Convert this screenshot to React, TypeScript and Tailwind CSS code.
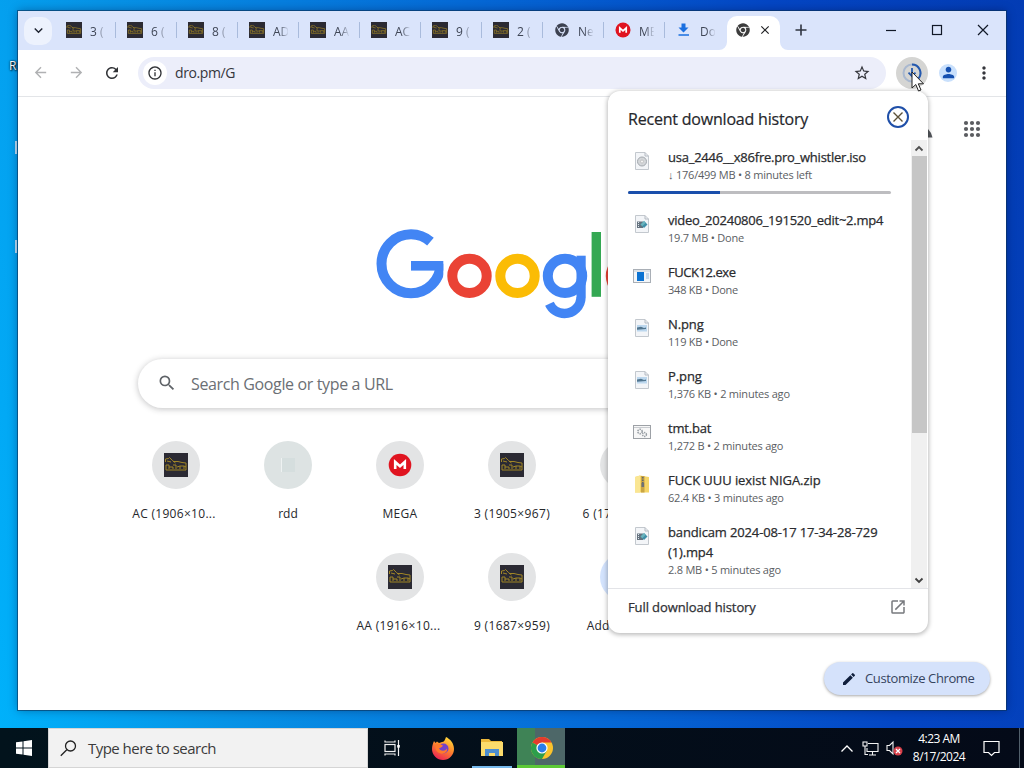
import type { ReactNode } from 'react'
import { FaChrome } from 'react-icons/fa'
import {
  MdArrowBack,
  MdArrowForward,
  MdClose,
  MdEdit,
  MdInfoOutline,
  MdKeyboardArrowDown,
  MdMoreVert,
  MdOpenInNew,
  MdPerson,
  MdRefresh,
  MdSearch,
  MdStarBorder,
} from 'react-icons/md'

type TabIcon = 'sketch' | 'chrome' | 'mega' | 'download'
type FileKind = 'iso' | 'video' | 'exe' | 'image' | 'bat' | 'zip'

interface Tab {
  icon: TabIcon
  title: string
}

interface Download {
  kind: FileKind
  name: string
  detail: string
  nameClass: string
  progress?: number
}

interface Shortcut {
  icon: 'sketch' | 'blank' | 'mega' | 'add'
  label: string
  labelClass: string
}

const TABS: Tab[] = [
  { icon: 'sketch', title: '3 (' },
  { icon: 'sketch', title: '6 (' },
  { icon: 'sketch', title: '8 (' },
  { icon: 'sketch', title: 'AD' },
  { icon: 'sketch', title: 'AA' },
  { icon: 'sketch', title: 'AC' },
  { icon: 'sketch', title: '9 (' },
  { icon: 'sketch', title: '2 (' },
  { icon: 'chrome', title: 'Ne' },
  { icon: 'mega', title: 'ME' },
  { icon: 'download', title: 'Do' },
]

const DOWNLOADS: Download[] = [
  {
    kind: 'iso',
    name: 'usa_2446__x86fre.pro_whistler.iso',
    detail: '↓ 176/499 MB • 8 minutes left',
    nameClass: 'tracking-[-0.24px]',
    progress: 35,
  },
  {
    kind: 'video',
    name: 'video_20240806_191520_edit~2.mp4',
    detail: '19.7 MB • Done',
    nameClass: 'tracking-[-0.24px]',
  },
  { kind: 'exe', name: 'FUCK12.exe', detail: '348 KB • Done', nameClass: 'tracking-[-0.45px]' },
  { kind: 'image', name: 'N.png', detail: '119 KB • Done', nameClass: 'tracking-[-0.1px]' },
  { kind: 'image', name: 'P.png', detail: '1,376 KB • 2 minutes ago', nameClass: 'tracking-[-0.1px]' },
  { kind: 'bat', name: 'tmt.bat', detail: '1,272 B • 2 minutes ago', nameClass: 'tracking-[-0.2px]' },
  { kind: 'zip', name: 'FUCK UUU iexist NIGA.zip', detail: '62.4 KB • 3 minutes ago', nameClass: 'tracking-[-0.07px]' },
  {
    kind: 'video',
    name: 'bandicam 2024-08-17 17-34-28-729 (1).mp4',
    detail: '2.8 MB • 5 minutes ago',
    nameClass: 'tracking-[-0.14px]',
  },
]

const SHORTCUT_ROWS: Shortcut[][] = [
  [
    { icon: 'sketch', label: 'AC (1906×10...', labelClass: '-ml-1 tracking-[0.3px]' },
    { icon: 'blank', label: 'rdd', labelClass: '' },
    { icon: 'mega', label: 'MEGA', labelClass: 'tracking-[0.3px]' },
    { icon: 'sketch', label: '3 (1905×967)', labelClass: 'tracking-[0.35px]' },
    { icon: 'sketch', label: '6 (1703×90...', labelClass: '-ml-2 tracking-[0.3px]' },
  ],
  [
    { icon: 'sketch', label: 'AA (1916×10...', labelClass: '-ml-[3px] tracking-[0.35px]' },
    { icon: 'sketch', label: '9 (1687×959)', labelClass: 'tracking-[0.35px]' },
    { icon: 'add', label: 'Add shortcut', labelClass: 'tracking-[0.2px]' },
  ],
]

function SketchIcon({ size }: { size: number }) {
  return (
    <svg width={size} height={size} viewBox="0 0 24 24" className="shrink-0">
      <rect width="24" height="24" fill="#2b2a33" />
      <g fill="none" stroke="#a08526" strokeWidth="1">
        <path d="M1.500 9V6l3-.5 1-1 3 3 3 2.500M9 8.500h5l4 1 4 .5v4" />
        <path d="M2 12v5h20v-3l-2-1v3M2 12h3v4M5 14h4v2M9 12h3v4M13 14l3-1v3M16 13h4M3 8l4 1" />
      </g>
    </svg>
  )
}

function MegaIcon({ size }: { size: number }) {
  return (
    <svg width={size} height={size} viewBox="0 0 24 24" className="shrink-0">
      <circle cx="12" cy="12" r="11.300" fill="#e01420" />
      <path d="M7.200 16V9L12 13.300 16.800 9v7" fill="none" stroke="#fff" strokeWidth="2.600" />
    </svg>
  )
}

function AppsGrid() {
  return (
    <svg width="18" height="18" viewBox="0 0 18 18" fill="#5a5c60" className="absolute top-[23px] right-[25px]">
      {[3, 9, 15].map((y) => [3, 9, 15].map((x) => <circle key={`${x}-${y}`} cx={x} cy={y} r="2.100" />))}
    </svg>
  )
}

function TabFavicon({ icon }: { icon: TabIcon }) {
  if (icon === 'sketch') return <SketchIcon size={16} />
  if (icon === 'mega') return <MegaIcon size={16} />
  if (icon === 'chrome') return <FaChrome size={14} className="mx-px text-[#3c4150]" />
  return (
    <svg width="16" height="16" viewBox="0 0 16 16" fill="#1a6fe0">
      <path d="M5.500 1.500h4v4h3L7.500 10.500 2.500 5.500h3zM2.500 12.200h10.500v1.500H2.500z" />
    </svg>
  )
}

function TabStrip() {
  return (
    <div className="flex h-[39px] shrink-0 items-center bg-[#dae4fb] pl-[6px]">
      <div className="flex size-7 items-center justify-center rounded-[10px] bg-[#edf2fd] text-[#1f2430]">
        <MdKeyboardArrowDown size={17} />
      </div>
      <div className="-mt-[2px] ml-[5px] flex">
        {TABS.map((tab, i) => (
          <div key={i} className="flex h-5 w-[61px] items-center pl-[9px]">
            <TabFavicon icon={tab.icon} />
            <div className="ml-2 w-[15px] overflow-hidden [mask-image:linear-gradient(to_right,black_40%,transparent_105%)]">
              <span className="text-[12px] whitespace-nowrap text-[#3f4656]">{tab.title}</span>
            </div>
            <div className={`ml-[10px] h-4 w-px ${i === TABS.length - 1 ? '' : 'bg-[#a9bbdc]'}`} />
          </div>
        ))}
      </div>
      <div className="relative -ml-px flex h-[34px] w-[53px] shrink-0 items-center self-end rounded-t-[10px] bg-white pb-[6px] pl-[9px]">
        <FaChrome size={14} className="text-[#3c3c3c]" />
        <MdClose size={14} className="ml-[8px] text-[#202124]" />
        <svg className="absolute bottom-0 -left-2" width="8" height="8" viewBox="0 0 8 8">
          <path d="M8 0V8H0A8 8 0 0 0 8 0Z" fill="#fff" />
        </svg>
        <svg className="absolute -right-2 bottom-0" width="8" height="8" viewBox="0 0 8 8">
          <path d="M0 0V8H8A8 8 0 0 1 0 0Z" fill="#fff" />
        </svg>
      </div>
      <svg width="12" height="12" viewBox="0 0 12 12" className="-mt-px ml-[15px]">
        <path d="M6 .5v11M.5 6h11" stroke="#2f3440" strokeWidth="1.600" />
      </svg>
      <svg width="120" height="14" viewBox="0 0 120 14" className="-mt-px ml-[75px]" fill="none" stroke="#111827" strokeWidth="1.200">
        <path d="M4 7.500h10" />
        <rect x="50.500" y="2.500" width="9" height="9" />
        <path d="M96 2l10 10M106 2l-10 10" />
      </svg>
    </div>
  )
}

function Toolbar() {
  return (
    <div className="flex h-[47px] shrink-0 items-center border-b border-[#e3e5e8] bg-white pb-px pl-[14px] text-[#44474c]">
      <MdArrowBack size={17} className="text-[#b0b1b3]" />
      <MdArrowForward size={17} className="ml-[19px] text-[#b0b1b3]" />
      <MdRefresh size={18} className="ml-[18px] text-[#303236]" />
      <div className="ml-[17px] flex h-8 w-[748px] items-center rounded-full bg-[#eceefa] pr-[15px] pl-[5px]">
        <div className="flex size-6 items-center justify-center rounded-full bg-white">
          <MdInfoOutline size={16} className="text-[#303236]" />
        </div>
        <span className="ml-2 text-[14px] tracking-[-0.4px] text-[#35363c]">dro.pm/G</span>
        <MdStarBorder size={18} className="ml-auto text-[#35363c]" />
      </div>
      <div className="ml-[10px] flex size-8 items-center justify-center rounded-full bg-[#d5d5d3]">
        <svg width="20" height="20" viewBox="0 0 20 20" fill="none">
          <circle cx="10" cy="10" r="8.500" stroke="#a9b8cf" strokeWidth="2" />
          <path d="M10 1.500a8.500 8.500 0 0 1 6.600 13.800" stroke="#2459ae" strokeWidth="2" />
          <path d="M10 5v8M6.500 9.700L10 13.200l3.500-3.500" stroke="#2459ae" strokeWidth="1.800" />
        </svg>
      </div>
      <div className="ml-[11px] flex size-[18px] items-center justify-center rounded-full bg-[#c9e0fc]">
        <MdPerson size={17} className="text-[#1550b0]" />
      </div>
      <MdMoreVert size={20} className="ml-[17px] text-[#35363c]" />
    </div>
  )
}

function GoogleLogo() {
  return (
    <svg width="284" height="94" viewBox="374 227 284 94" fill="none" aria-label="Google">
      <clipPath id="logo-edge">
        <rect x="374" y="227" width="69.300" height="74" />
      </clipPath>
      <circle
        cx="411"
        cy="263.800"
        r="29.500"
        stroke="#4285f4"
        strokeWidth="10"
        strokeDasharray="160 200"
        clipPath="url(#logo-edge)"
      />
      <rect x="411" y="261" width="32.300" height="9.600" fill="#4285f4" />
      <circle cx="469.500" cy="275.900" r="17.200" stroke="#ea4335" strokeWidth="10" />
      <circle cx="517.500" cy="275.900" r="17.200" stroke="#fbbc05" strokeWidth="10" />
      <circle cx="565" cy="275.900" r="17.200" stroke="#4285f4" strokeWidth="10" />
      <rect x="576.500" y="255.700" width="9.200" height="41.500" fill="#4285f4" />
      <circle cx="564.500" cy="297" r="16.500" stroke="#4285f4" strokeWidth="9.400" strokeDasharray="44.600 80" />
      <rect x="591.600" y="232" width="9.400" height="64.800" fill="#34a853" />
      <circle cx="628" cy="275.900" r="17.200" stroke="#ea4335" strokeWidth="10" />
    </svg>
  )
}

function ShortcutTile({ shortcut }: { shortcut: Shortcut }) {
  const { icon, label, labelClass } = shortcut
  return (
    <div className="flex h-28 w-28 flex-col items-center">
      <div
        className={`flex size-12 items-center justify-center rounded-full ${
          icon === 'add' ? 'bg-[#d3e3fd]' : icon === 'blank' ? 'bg-[#dde3e3]' : 'bg-[#e3e4e5]'
        }`}
      >
        {icon === 'sketch' && <SketchIcon size={24} />}
        {icon === 'mega' && <MegaIcon size={24} />}
        {icon === 'blank' && <div className="h-3.5 w-3.5 border-l border-[#eef2f2] bg-[#d5dede]" />}
      </div>
      <span className={`mt-4 text-[12px] leading-[18px] whitespace-nowrap text-[#26272b] ${labelClass}`}>{label}</span>
    </div>
  )
}

function NewTabPage() {
  return (
    <div className="relative flex flex-1 flex-col overflow-hidden bg-white">
      <AppsGrid />
      <div className="mt-[130px] ml-[356px]">
        <GoogleLogo />
      </div>
      <div className="mt-[38px] ml-[120px] flex h-[49px] w-[748px] shrink-0 items-center rounded-full bg-white pl-[19px] shadow-[0_1px_6px_rgba(32,33,36,0.28)]">
        <MdSearch size={20} className="-mt-px text-[#5f6368]" />
        <span className="ml-[14px] text-[16px] tracking-[-0.36px] text-[#6b6f74]">Search Google or type a URL</span>
      </div>
      <div className="mt-[33px] ml-[102px] flex">
        {SHORTCUT_ROWS[0].map((s) => (
          <ShortcutTile key={s.label} shortcut={s} />
        ))}
      </div>
      <div className="ml-[326px] flex">
        {SHORTCUT_ROWS[1].map((s) => (
          <ShortcutTile key={s.label} shortcut={s} />
        ))}
      </div>
      <button
        type="button"
        className="absolute right-[16px] bottom-[15px] flex h-[33px] w-[166px] items-center rounded-full bg-[#d5e2fb] pl-[17px] text-[13px] tracking-[-0.38px] text-[#36445f] shadow-[0_1px_3px_rgba(0,0,0,0.35)]"
      >
        <MdEdit size={16} className="text-[#101f3c]" />
        <span className="ml-2 whitespace-nowrap">Customize Chrome</span>
      </button>
    </div>
  )
}

function Page({ children }: { children: ReactNode }) {
  return (
    <svg width="16" height="20" viewBox="0 0 16 20">
      <path d="M1.500 1.500h9.500l3.500 3.500v13.500h-13z" fill="#f3f5f8" stroke="#c3c8ce" />
      <path d="M11 1.500V5h3.500" fill="none" stroke="#b4bac2" />
      {children}
    </svg>
  )
}

function FileIcon({ kind }: { kind: FileKind }) {
  if (kind === 'iso')
    return (
      <Page>
        <circle cx="8" cy="10.500" r="4.500" fill="#d3d6d9" stroke="#a3a8ae" />
        <circle cx="8" cy="10.500" r="1.500" fill="#f4f4f4" stroke="#b0b0b0" strokeWidth=".6" />
      </Page>
    )
  if (kind === 'video')
    return (
      <Page>
        <rect x="3" y="7.500" width="6" height="6.500" fill="#65727e" />
        <path d="M4 8.500h1M4 10.500h1M4 12.500h1" stroke="#dfe7ee" />
        <path d="M10 7l3.500 3.500L10 14l-3.500-3.500z" fill="#3f8fa8" />
        <path d="M10 7l1.800 1.800L8.300 12.300 6.500 10.500z" fill="#69b3bd" />
      </Page>
    )
  if (kind === 'image')
    return (
      <Page>
        <rect x="3" y="7" width="10" height="6.500" fill="#bcd7ee" />
        <path d="M3 9.500l4-.8 3 1.300 2-.5v1.500l-9 .8z" fill="#51758f" />
      </Page>
    )
  if (kind === 'exe')
    return (
      <svg width="20" height="16" viewBox="0 0 20 16">
        <rect x="1.500" y="1.500" width="17" height="13" fill="#f3f6f9" stroke="#a9afb6" />
        <path d="M2 3h16" stroke="#c9ced4" />
        <rect x="5" y="4" width="7" height="9" fill="#0c73d2" />
        <path d="M14 6h3M14 8h3M14 10h3" stroke="#9dbbd8" />
      </svg>
    )
  if (kind === 'bat')
    return (
      <svg width="20" height="16" viewBox="0 0 20 16" fill="none">
        <rect x="1.500" y="1.500" width="17" height="13" fill="#f7f7f7" stroke="#9da1a6" />
        <path d="M2 3.500h16" stroke="#c9ccd0" />
        <circle cx="8" cy="7.500" r="2.200" stroke="#9aa0a6" strokeWidth="1.600" strokeDasharray="1.400 .8" />
        <circle cx="12.500" cy="10.500" r="1.900" stroke="#9aa0a6" strokeWidth="1.500" strokeDasharray="1.200 .7" />
      </svg>
    )
  return (
    <svg width="16" height="20" viewBox="0 0 16 20">
      <path d="M1 3l5-1.500 9 1.500v15.500H1z" fill="#f5d567" />
      <path d="M1 3l5-1.500V18.500H1z" fill="#fae693" />
      <rect x="7" y="2" width="3.500" height="16.500" fill="#c9a545" />
      <path d="M8.800 3v9" stroke="#5e6570" strokeWidth="1.500" strokeDasharray="1.500 1" />
      <rect x="7.500" y="9" width="2.600" height="4" fill="#6d7176" />
    </svg>
  )
}

function DownloadRow({ item }: { item: Download }) {
  return (
    <div className={item.progress === undefined ? 'pb-[12px]' : 'pb-[16px]'}>
      <div className="flex">
        <div className="mt-1 flex h-5 w-7 shrink-0 items-center justify-center">
          <FileIcon kind={item.kind} />
        </div>
        <div className="ml-3 w-[222px]">
          <div className={`text-[13px] leading-5 text-[#2a2b2e] [-webkit-text-stroke:0.25px_#2a2b2e] ${item.nameClass}`}>
            {item.name}
          </div>
          <div className="pb-[4px] text-[11px] leading-[16px] tracking-[-0.22px] whitespace-nowrap text-[#5b5e63]">
            {item.detail}
          </div>
        </div>
      </div>
      {item.progress !== undefined && (
        <div className="mt-[4px] h-[3px] w-[263px] overflow-hidden rounded-full bg-[#bdbdc0]">
          <div className="h-full bg-[#1a4fac]" style={{ width: `${item.progress}%` }} />
        </div>
      )}
    </div>
  )
}

function DownloadsBubble() {
  return (
    <div className="absolute top-[80px] left-[590px] flex h-[542px] w-[320px] flex-col rounded-xl bg-white shadow-[0_1px_4px_1px_rgba(0,0,0,0.26)]">
      <div className="flex h-[49px] shrink-0 items-center justify-between pt-[6px] pr-[19px] pl-5">
        <h2 className="text-[16px] tracking-[-0.2px] text-[#26272b] [-webkit-text-stroke:0.2px_#26272b]">Recent download history</h2>
        <button type="button" aria-label="Close" className="-mt-1 flex size-[22px] items-center justify-center rounded-full border-2 border-[#1f4fa8]">
          <svg width="12" height="12" viewBox="0 0 12 12" stroke="#5c5138" strokeWidth="1.400">
            <path d="M1.500 1.500l9 9M10.500 1.500l-9 9" />
          </svg>
        </button>
      </div>
      <div className="flex h-[448px] shrink-0 overflow-hidden">
        <div className="flex-1 pt-[7px] pl-5">
          {DOWNLOADS.map((d) => (
            <DownloadRow key={d.name} item={d} />
          ))}
        </div>
        <div className="flex w-4 flex-col items-center bg-[#f0f0f0]">
          <svg width="16" height="16" viewBox="0 0 16 16" fill="none" stroke="#505050" strokeWidth="1.800">
            <path d="M4.500 10.500L8 7l3.500 3.500" />
          </svg>
          <div className="h-[277px] w-[15px] bg-[#c6c6c6]" />
          <svg className="mt-auto" width="16" height="16" viewBox="0 0 16 16" fill="none" stroke="#404040" strokeWidth="1.800">
            <path d="M4.500 6.500L8 10l3.500-3.500" />
          </svg>
        </div>
        <div className="w-px" />
      </div>
      <div className="flex h-[39px] shrink-0 items-center justify-between border-t border-[#e3e4e8] pr-[21px] pl-5">
        <span className="text-[13px] tracking-[-0.1px] text-[#303136] [-webkit-text-stroke:0.25px_#303136]">Full download history</span>
        <MdOpenInNew size={18} className="-mt-[2px] text-[#77797d]" />
      </div>
    </div>
  )
}

function BrowserWindow() {
  return (
    <div className="relative mt-[11px] ml-[18px] flex h-[699px] w-[988px] flex-col bg-white shadow-[0_0_0_1px_rgba(10,50,90,0.6),0_0_9px_rgba(0,10,50,0.4)]">
      <TabStrip />
      <Toolbar />
      <NewTabPage />
      <svg className="absolute top-[118px] left-[909px]" width="6" height="9" viewBox="0 0 6 9">
        <path d="M1 0l3 4 1.500 4.500H0V0z" fill="#54575c" />
      </svg>
      <DownloadsBubble />
      <svg className="absolute top-[60px] left-[893px]" width="14" height="22" viewBox="0 0 14 22">
        <path d="M1 1v16l3.800-3.500L7.500 20l2.500-1-2.700-6.200H12.500z" fill="#fff" stroke="#222" />
      </svg>
    </div>
  )
}

function Firefox() {
  return (
    <svg width="24" height="24" viewBox="0 0 24 24">
      <defs>
        <linearGradient id="fx" x1=".8" y1="0" x2=".3" y2="1">
          <stop offset="0" stopColor="#ffdf3d" />
          <stop offset=".45" stopColor="#ff8a2b" />
          <stop offset="1" stopColor="#ec2154" />
        </linearGradient>
      </defs>
      <path d="M3 5l1.500 2L6 5.500 8 7l3-1c2 0 3-2 4-5 4 2 8 6 8 12a11 11 0 0 1-22 0C1 10 2 7 3 5z" fill="url(#fx)" />
      <circle cx="12.500" cy="12.500" r="5" fill="#7542c9" />
      <path d="M5 8.500c3-1 5 0 7 1-1 2-3 2-4 3 2 3 6 3 8 0 1 5-6 7-10 3-2-2-2-5-1-7z" fill="#ff7a2c" />
    </svg>
  )
}

function Explorer() {
  return (
    <svg width="24" height="20" viewBox="0 0 24 20">
      <path d="M1 2h8l2 2h11v15H1z" fill="#edb93b" />
      <path d="M1 5h22v14H1z" fill="#fbdb6c" />
      <path d="M5 19v-7h14v7h-4v-3H9v3z" fill="#4d8ed0" />
    </svg>
  )
}

function ChromeColor() {
  return (
    <svg width="24" height="24" viewBox="0 0 24 24">
      <circle cx="12" cy="12" r="11" fill="#fbc32c" />
      <path d="M12 12L2.470 6.500A11 11 0 0 1 21.530 6.500H12z" fill="#e33b2e" />
      <path d="M12 12L2.470 6.500A11 11 0 0 0 12 23l4.800-8.300z" fill="#2c9e4b" />
      <circle cx="12" cy="12" r="5.600" fill="#fff" />
      <circle cx="12" cy="12" r="4.400" fill="#2b7de9" />
    </svg>
  )
}

function Taskbar() {
  return (
    <div className="flex h-10 shrink-0 items-center bg-linear-to-r from-[#02131c] to-[#040a18] text-white">
      <div className="flex w-12 items-center justify-center">
        <svg width="16" height="16" viewBox="0 0 16 16" fill="#fff">
          <path d="M0 2.300L6.500 1.400V7.500H0zM7.500 1.250L16 0V7.500H7.500zM0 8.500H6.500V14.600L0 13.700zM7.500 8.500H16V16L7.500 14.750z" />
        </svg>
      </div>
      <div className="flex h-full w-80 items-center border border-[#d5d5d5] bg-[#f2f2f2] pl-[11px]">
        <svg width="17" height="17" viewBox="0 0 17 17" fill="none" stroke="#222" strokeWidth="1.300">
          <circle cx="10.500" cy="6" r="5" />
          <path d="M6.800 9.700L.8 15.800" />
        </svg>
        <span className="ml-[11px] text-[15px] tracking-[-0.53px] text-[#3b3b3b]">Type here to search</span>
      </div>
      <div className="flex w-12 items-center justify-center">
        <svg width="17" height="16" viewBox="0 0 17 16" fill="none" stroke="#f0f0f0" strokeWidth="1.200">
          <rect x="1" y="4.500" width="10" height="7" />
          <path d="M1 .5V2h10V.5M1 15.500V14h10v1.500M14.500 0v16" />
          <rect x="13.200" y="5" width="2.600" height="2.600" fill="#fff" stroke="none" />
        </svg>
      </div>
      <div className="flex w-[54px] items-center justify-center">
        <Firefox />
      </div>
      <div className="ml-[2px] flex h-full w-10 items-center justify-center border-b-2 border-[#76b9ed]">
        <Explorer />
      </div>
      <div className="ml-[5px] flex h-full w-12 items-center justify-center border-b-[3px] border-[#5cc936] bg-[linear-gradient(to_right,#3f8356_37%,#4d6768_37%)] pt-[2px] pl-[2px]">
        <ChromeColor />
      </div>
      <div className="ml-auto flex items-center">
        <svg width="12" height="7" viewBox="0 0 12 7" fill="none" stroke="#fff" strokeWidth="1.300">
          <path d="M.5 6.500L6 1l5.500 5.500" />
        </svg>
        <svg width="17" height="15" viewBox="0 0 17 15" fill="none" stroke="#f2f2f2" strokeWidth="1.100" className="ml-[9px]">
          <path d="M6 2.500h10v8H5V7M10.500 10.500v3M7 14h7" />
          <rect x="1" y="1" width="4" height="4" />
          <path d="M3 5v8.500h3" />
        </svg>
        <svg width="17" height="16" viewBox="0 0 17 16" fill="none" className="ml-[7px]">
          <path d="M1 5.500h2.500L7 2v12l-3.500-3.500H1z" stroke="#f2f2f2" strokeWidth="1.100" />
          <circle cx="12" cy="11" r="4.500" fill="#d8404a" />
          <path d="M10 9l4 4M14 9l-4 4" stroke="#fff" strokeWidth="1.300" />
        </svg>
        <div className="ml-[8px] flex w-[56px] flex-col items-center text-[12px] leading-[18px] tracking-[-0.5px] whitespace-nowrap">
          <span>4:23 AM</span>
          <span>8/17/2024</span>
        </div>
        <svg width="17" height="17" viewBox="0 0 17 17" fill="none" stroke="#fff" strokeWidth="1.200" className="ml-[16px]">
          <path d="M1 1.500h15v11h-4.500l-3 3-3-3H1z" />
        </svg>
        <div className="ml-[19px] h-10 w-px bg-[#52606c]" />
        <div className="w-[4px]" />
      </div>
    </div>
  )
}

export default function App() {
  return (
    <div className="relative flex h-[768px] w-[1024px] flex-col overflow-hidden bg-[linear-gradient(80deg,#00b2fb_0%,#0793e6_20%,#0569d6_52%,#0446c4_78%,#033cb4_100%)] font-['Open_Sans','Noto_Sans',sans-serif]">
      <span className="absolute top-[58px] left-[9px] text-[12px] leading-[15px] text-white [text-shadow:1px_1px_2px_#000,0_0_2px_#000]">R</span>
      <span className="absolute top-[141px] left-[15px] h-[13px] w-[2px] bg-[#bfe0f5]" />
      <span className="absolute top-[240px] left-[15px] h-[13px] w-[2px] bg-[#bfe0f5]" />
      <div className="flex-1">
        <BrowserWindow />
      </div>
      <Taskbar />
    </div>
  )
}
